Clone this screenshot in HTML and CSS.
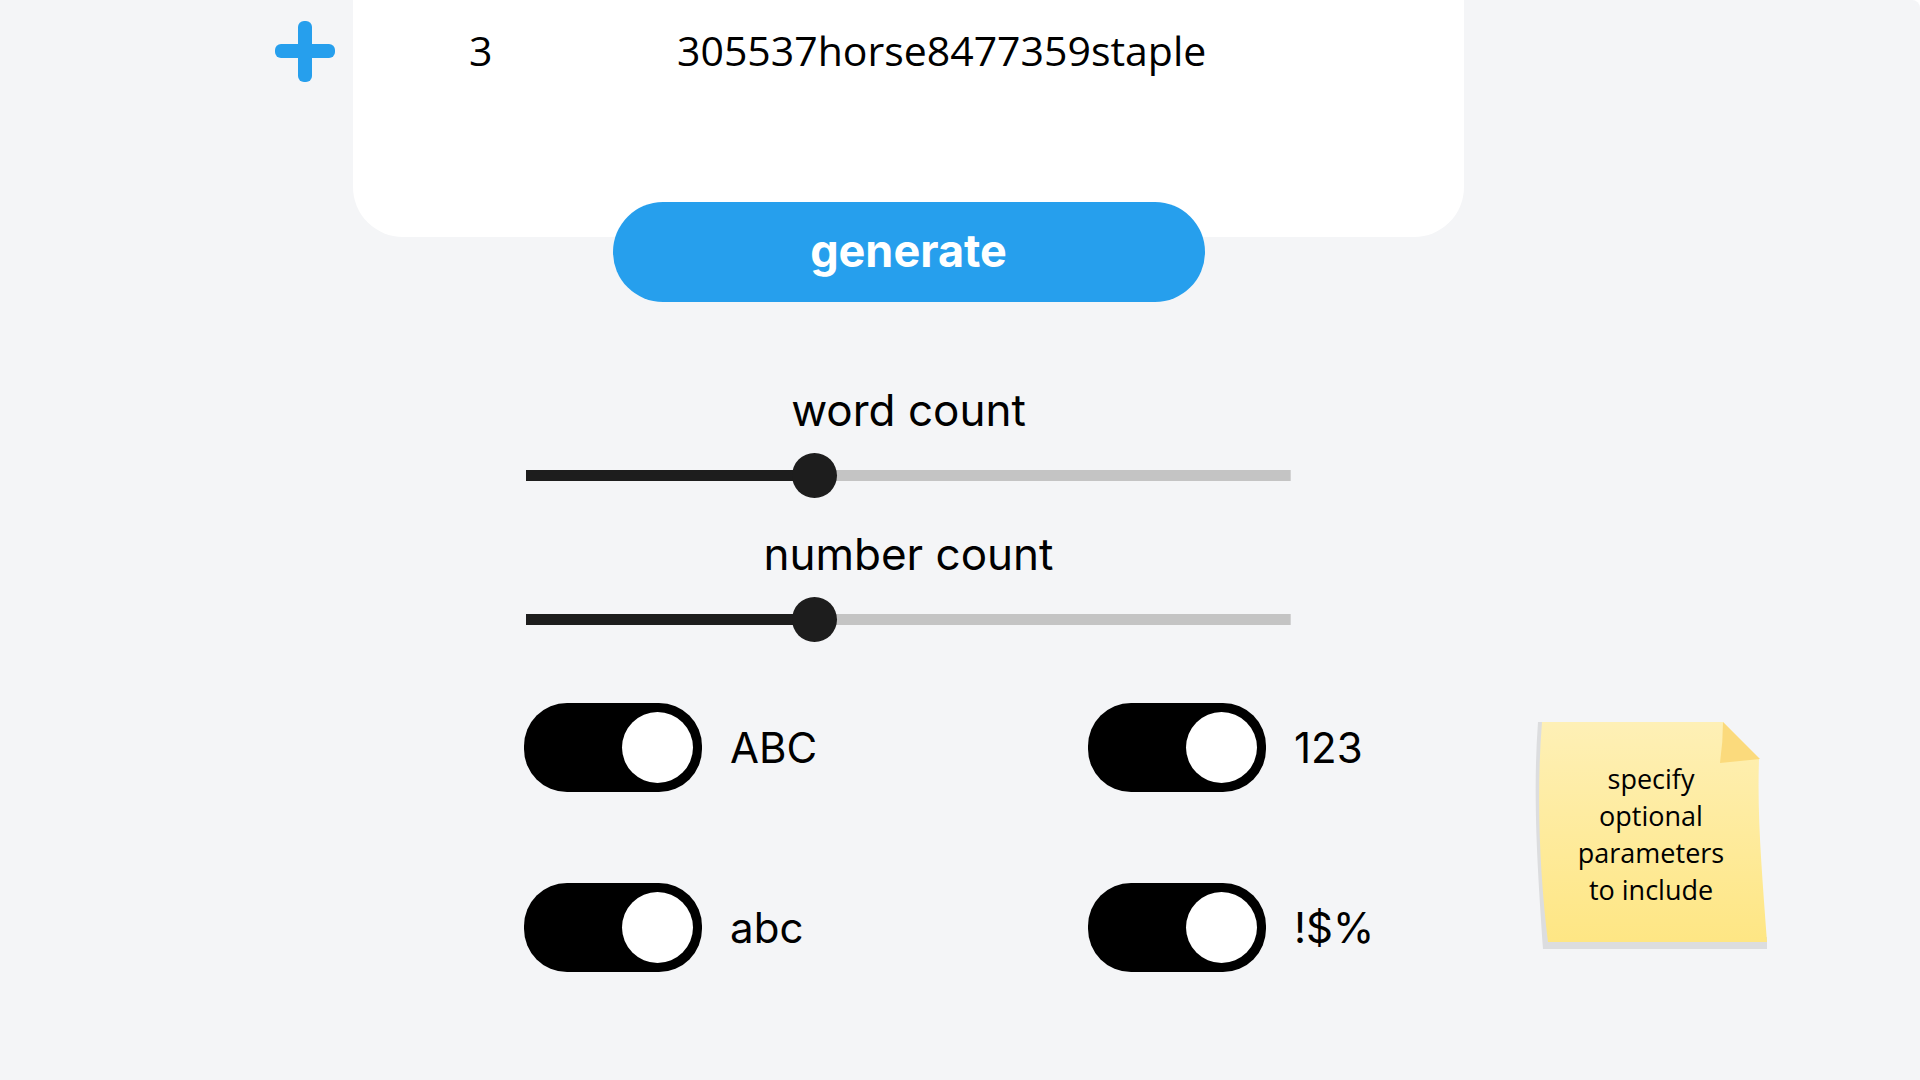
FILE: index.html
```html
<!DOCTYPE html>
<html lang="en">
<head>
<meta charset="utf-8">
<meta name="viewport" content="width=device-width, initial-scale=1">
<title>Password generator</title>
<link rel="stylesheet" href="styles.css">
</head>
<body>
<main class="page">
  <div class="add">
    <button class="add-button" type="button" aria-label="Add password">
      <svg viewBox="0 0 62 62" width="62" height="62" aria-hidden="true">
        <rect x="1" y="24" width="60" height="14" rx="6"/>
        <rect x="24" y="1" width="14" height="61" rx="6"/>
      </svg>
    </button>
  </div>
  <section class="card">
    <div class="password-row">
      <span class="password-index">3</span>
      <output class="password">305537horse8477359staple</output>
    </div>
  </section>

  <form class="controls">
    <button class="generate" type="button">generate</button>
    <div class="sliders">
      <div class="slider">
        <label for="words">word count</label>
        <input id="words" type="range" min="0" max="100" value="37">
      </div>
      <div class="slider">
        <label for="numbers">number count</label>
        <input id="numbers" type="range" min="0" max="100" value="37">
      </div>
    </div>
    <div class="toggles">
      <label class="toggle"><input type="checkbox" role="switch" checked><span>ABC</span></label>
      <label class="toggle"><input type="checkbox" role="switch" checked><span>123</span></label>
      <label class="toggle"><input type="checkbox" role="switch" checked><span>abc</span></label>
      <label class="toggle"><input type="checkbox" role="switch" checked><span>!$%</span></label>
    </div>
  </form>

  <aside class="note">
    <svg class="note-paper" viewBox="0 0 232 228" aria-hidden="true">
      <defs>
        <linearGradient id="paper" x1="0" y1="0" x2="0" y2="1">
          <stop offset="0" stop-color="#fef0b6"/>
          <stop offset="1" stop-color="#fee684"/>
        </linearGradient>
      </defs>
      <path fill="#dcdddf" d="M3 0H20V215H232V227H8C4 165-3 80 3 0Z"/>
      <path fill="url(#paper)" d="M7 0H188L224 37C222 95 227 150 232 220H13C5 155 1 75 7 0Z"/>
      <path fill="#fbda7c" d="M188 0L225 37Q205 39 185 41Q188 20 188 0Z"/>
    </svg>
    <p class="note-text">specify optional parameters to include</p>
  </aside>
</main>
</body>
</html>
```
FILE: styles.css
```css
* {
  box-sizing: border-box;
}

html {
  background: #fff;
}

body {
  margin: 0;
  color: #000;
  font-family: Inter, "Open Sans", sans-serif;
}

.page {
  display: grid;
  grid-template-columns: 353fr 1111fr 456fr;
  grid-template-rows: auto 1fr;
  min-height: 100vh;
  background: #f4f5f7;
  border-top-right-radius: 8px;
}

.add {
  display: flex;
  justify-content: flex-end;
  align-items: flex-start;
  padding: 20px 17px 0 0;
}

.add-button {
  padding: 0;
  border: 0;
  background: none;
  cursor: pointer;
}

.add-button svg {
  display: block;
  fill: #269fed;
}

.card {
  padding: 18px 48px 155px 116px;
  background: #fff;
  border-radius: 0 0 50px 50px;
}

.password-row {
  display: grid;
  grid-template-columns: 26px 1fr;
  column-gap: 182px;
  font: 41px/64px "Open Sans", sans-serif;
}

.controls {
  grid-column: 2;
  display: flex;
  flex-direction: column;
  align-items: center;
  margin-top: -35px;
}

.generate {
  width: 592px;
  max-width: 100%;
  padding: 19px 20px 21px;
  border: 0;
  border-radius: 50px;
  background: #269fed;
  color: #fff;
  font: 700 45px/60px Inter, sans-serif;
  cursor: pointer;
}

.sliders {
  display: flex;
  flex-direction: column;
  gap: 26px;
  width: 68.8%;
  margin-top: 78px;
}

.slider {
  display: flex;
  flex-direction: column;
  align-items: center;
  gap: 13px;
  font-size: 44px;
  line-height: 60px;
}

.slider input {
  appearance: none;
  width: 100%;
  height: 45px;
  margin: 0;
  background: linear-gradient(90deg, #1d1d1d 38%, #c4c4c4 38%) center / 100% 11px no-repeat;
  cursor: pointer;
}

.slider input::-webkit-slider-thumb {
  appearance: none;
  width: 45px;
  height: 45px;
  border-radius: 50%;
  background: #1d1d1d;
}

.slider input::-moz-range-thumb {
  width: 45px;
  height: 45px;
  border: 0;
  border-radius: 50%;
  background: #1d1d1d;
}

.toggles {
  display: grid;
  grid-template-columns: 3fr 2fr;
  row-gap: 91px;
  align-self: flex-end;
  width: 84.6%;
  margin-top: 61px;
}

.toggle {
  display: flex;
  align-items: center;
  gap: 28px;
  font-size: 42px;
  cursor: pointer;
}

.toggle input {
  appearance: none;
  display: flex;
  align-items: center;
  flex: none;
  width: 178px;
  height: 89px;
  margin: 0;
  padding: 0 9px;
  border-radius: 43px;
  background: #c4c4c4;
  cursor: pointer;
}

.toggle input::before {
  content: "";
  width: 71px;
  height: 71px;
  border-radius: 50%;
  background: #fff;
}

.toggle input:checked {
  justify-content: flex-end;
  background: #000;
}

.note {
  display: grid;
  justify-self: start;
  align-self: start;
  width: 232px;
  margin: 485px 0 0 71px;
}

.note-paper,
.note-text {
  grid-area: 1 / 1;
}

.note-paper {
  display: block;
  width: 100%;
}

.note-text {
  margin: 0;
  padding: 38px 36px 0;
  font: 27px/37px "Open Sans", sans-serif;
  text-align: center;
}
```
